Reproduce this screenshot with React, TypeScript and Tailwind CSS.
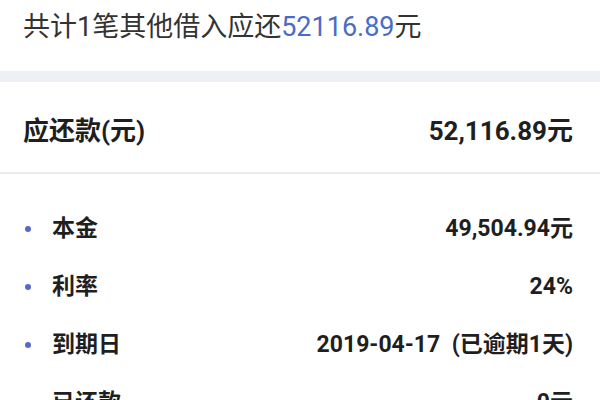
const font = { fontFamily: "Roboto, 'Noto Sans CJK SC', sans-serif" };

type Item = { label: string; value: string };

const items: Item[] = [
  { label: "本金", value: "49,504.94元" },
  { label: "利率", value: "24%" },
  { label: "到期日", value: "2019-04-17  (已逾期1天)" },
  { label: "已还款", value: "0元" },
];

function DetailRow({ label, value }: Item) {
  return (
    <div className="flex h-[58px] items-center justify-between pr-[27px]">
      <div className="flex items-center">
        <span className="ml-[25px] mr-[21px] h-[6px] w-[6px] rounded-full bg-[#5468d4]" />
        <span className="text-[23px] font-bold text-[#1f1f1f]">{label}</span>
      </div>
      <span className="whitespace-pre text-[23px] font-bold text-[#1f1f1f]">{value}</span>
    </div>
  );
}

export default function App() {
  return (
    <div className="h-[400px] w-[600px] overflow-hidden bg-white" style={font}>
      <div className="px-[23px] pt-[11px] pb-[27px] text-[27px] leading-[33px] text-[#333]">
        共计1笔其他借入应还<span className="text-[#4a6cc4]">52116.89</span>元
      </div>
      <div className="h-[11px] bg-[#edf1f5]" />

      <div className="flex items-center justify-between border-b-2 border-[#ededed] pt-[35px] pb-[26px] pl-[23px] pr-[27px] text-[26px] font-bold leading-[29px] text-[#1f1f1f]">
        <span>应还款(元)</span>
        <span>52,116.89元</span>
      </div>

      <div className="pt-[26px]">
        {items.map((item) => (
          <DetailRow key={item.label} {...item} />
        ))}
      </div>
    </div>
  );
}
